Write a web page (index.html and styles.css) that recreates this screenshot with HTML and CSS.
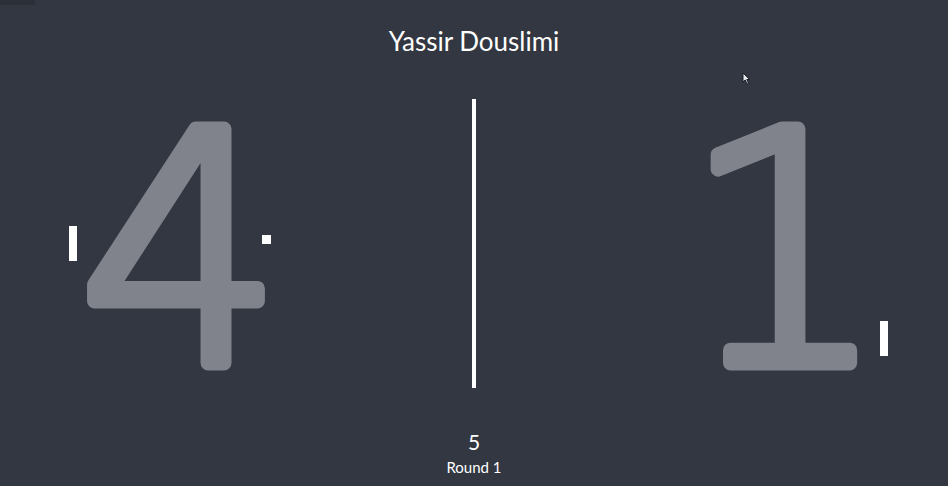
FILE: index.html
```html
<!DOCTYPE html>
<html>
<head>
<meta charset="utf-8">
<link rel="stylesheet" href="styles.css">
</head>
<body>
<div class="corner"></div>
<header class="title">Yassir Douslimi</header>
<main class="board">
  <div class="side">
    <svg class="score" viewBox="0 0 472 289" width="472" height="289">
      <text x="181" y="264" text-anchor="middle">4</text>
    </svg>
  </div>
  <div class="net"></div>
  <div class="side">
    <svg class="score" viewBox="0 0 472 289" width="472" height="289">
      <text x="309" y="264" text-anchor="middle">1</text>
    </svg>
  </div>
  <div class="paddle paddle-left"></div>
  <div class="paddle paddle-right"></div>
  <div class="ball"></div>
</main>
<footer class="info">
  <div class="count">5</div>
  <div class="round">Round 1</div>
</footer>
<svg class="cursor" width="9" height="13" viewBox="0 0 9 13"><path d="M1 1 L1 10 L3.2 8 L5 12 L6.5 11.3 L4.8 7.5 L7.6 7.5 Z" fill="#e6e8ee" stroke="#1c1f25" stroke-width="1"/></svg>
</body>
</html>
```
FILE: styles.css
```css
html, body {
  margin: 0;
  padding: 0;
}
body {
  width: 948px;
  height: 486px;
  background: #323741;
  color: #ffffff;
  font-family: "Lato", "Open Sans", sans-serif;
  position: relative;
  overflow: hidden;
}
.corner {
  position: absolute;
  left: 0;
  top: 0;
  width: 35px;
  height: 5px;
  background: #2b2f37;
}
.title {
  box-sizing: border-box;
  text-align: center;
  font-size: 26px;
  line-height: 30px;
  padding-top: 26px;
  height: 99px;
}
.board {
  position: relative;
  display: grid;
  grid-template-columns: 472px 4px 472px;
  height: 289px;
}
.side {
  height: 289px;
}
.score {
  display: block;
  overflow: visible;
}
.score text {
  font-family: "DejaVu Sans", sans-serif;
  font-weight: 200;
  font-size: 321px;
  fill: #80838b;
  stroke: #80838b;
  stroke-width: 15px;
  stroke-linejoin: round;
  stroke-linecap: round;
}
.net {
  background: #ffffff;
}
.paddle {
  position: absolute;
  width: 8px;
  height: 35px;
  background: #ffffff;
}
.paddle-left {
  left: 69px;
  top: 127px;
}
.paddle-right {
  left: 880px;
  top: 222px;
}
.ball {
  position: absolute;
  left: 262px;
  top: 136px;
  width: 9px;
  height: 9px;
  background: #ffffff;
}
.info {
  text-align: center;
  padding-top: 42px;
}
.count {
  font-size: 21px;
  line-height: 24px;
}
.round {
  font-size: 15px;
  line-height: 18px;
  margin-top: 4px;
}
.cursor {
  position: absolute;
  left: 742px;
  top: 72px;
}
```
